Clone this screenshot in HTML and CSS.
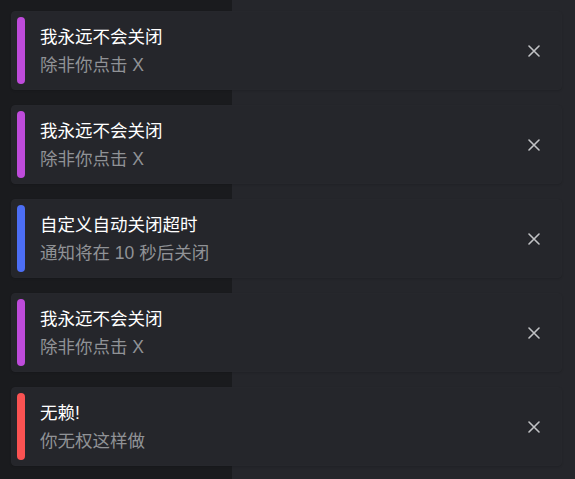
FILE: index.html
```html
<!DOCTYPE html>
<html lang="zh">
<head>
<meta charset="utf-8">
<link rel="stylesheet" href="styles.css">
</head>
<body>
<div class="stack">
  <div class="note">
    <span class="bar bar-violet"></span>
    <div class="text">
      <div class="title">我永远不会关闭</div>
      <div class="desc">除非你点击 X</div>
    </div>
    <button class="close" aria-label="关闭"><svg width="12" height="12" viewBox="0 0 12 12"><path d="M1 1L11 11M11 1L1 11" stroke="#c1c2c5" stroke-width="1.6" stroke-linecap="round"/></svg></button>
  </div>
  <div class="note">
    <span class="bar bar-violet"></span>
    <div class="text">
      <div class="title">我永远不会关闭</div>
      <div class="desc">除非你点击 X</div>
    </div>
    <button class="close" aria-label="关闭"><svg width="12" height="12" viewBox="0 0 12 12"><path d="M1 1L11 11M11 1L1 11" stroke="#c1c2c5" stroke-width="1.6" stroke-linecap="round"/></svg></button>
  </div>
  <div class="note">
    <span class="bar bar-blue"></span>
    <div class="text">
      <div class="title">自定义自动关闭超时</div>
      <div class="desc">通知将在 10 秒后关闭</div>
    </div>
    <button class="close" aria-label="关闭"><svg width="12" height="12" viewBox="0 0 12 12"><path d="M1 1L11 11M11 1L1 11" stroke="#c1c2c5" stroke-width="1.6" stroke-linecap="round"/></svg></button>
  </div>
  <div class="note">
    <span class="bar bar-violet"></span>
    <div class="text">
      <div class="title">我永远不会关闭</div>
      <div class="desc">除非你点击 X</div>
    </div>
    <button class="close" aria-label="关闭"><svg width="12" height="12" viewBox="0 0 12 12"><path d="M1 1L11 11M11 1L1 11" stroke="#c1c2c5" stroke-width="1.6" stroke-linecap="round"/></svg></button>
  </div>
  <div class="note">
    <span class="bar bar-red"></span>
    <div class="text">
      <div class="title">无赖!</div>
      <div class="desc">你无权这样做</div>
    </div>
    <button class="close" aria-label="关闭"><svg width="12" height="12" viewBox="0 0 12 12"><path d="M1 1L11 11M11 1L1 11" stroke="#c1c2c5" stroke-width="1.6" stroke-linecap="round"/></svg></button>
  </div>
</div>
</body>
</html>
```
FILE: styles.css
```css
html, body {
  margin: 0;
  padding: 0;
  height: 100%;
}
body {
  background: linear-gradient(to right, #1a1b1e 0, #1a1b1e 232px, #25262b 232px, #25262b 100%);
  font-family: "Liberation Sans", "Noto Sans CJK SC", sans-serif;
}
.stack {
  display: flex;
  flex-direction: column;
  gap: 15px;
  padding: 11px 0 0 11px;
  width: 551px;
}
.note {
  box-sizing: border-box;
  height: 79px;
  display: flex;
  align-items: stretch;
  padding: 6px;
  background: #25262b;
  border: 1px solid #26272c;
  border-radius: 4px;
  box-shadow: 0 1px 2px rgba(0,0,0,0.12);
}
.bar {
  width: 8px;
  flex: none;
  border-radius: 4px;
  margin-left: -1px;
  margin-top: -1px;
  margin-bottom: -1px;
}
.bar-violet { background: #be4bdb; }
.bar-blue { background: #4c6ef5; }
.bar-red { background: #fa5252; }
.text {
  display: flex;
  flex-direction: column;
  justify-content: center;
  margin-left: 15px;
  flex: 1;
}
.title {
  color: #ffffff;
  font-size: 17.5px;
  line-height: 28px;
}
.desc {
  color: #909296;
  font-size: 17.5px;
  line-height: 28px;
}
.close {
  align-self: center;
  width: 28px;
  height: 28px;
  margin-right: 7px;
  padding: 0;
  border: 0;
  background: transparent;
  display: flex;
  align-items: center;
  justify-content: center;
  cursor: pointer;
}
```
